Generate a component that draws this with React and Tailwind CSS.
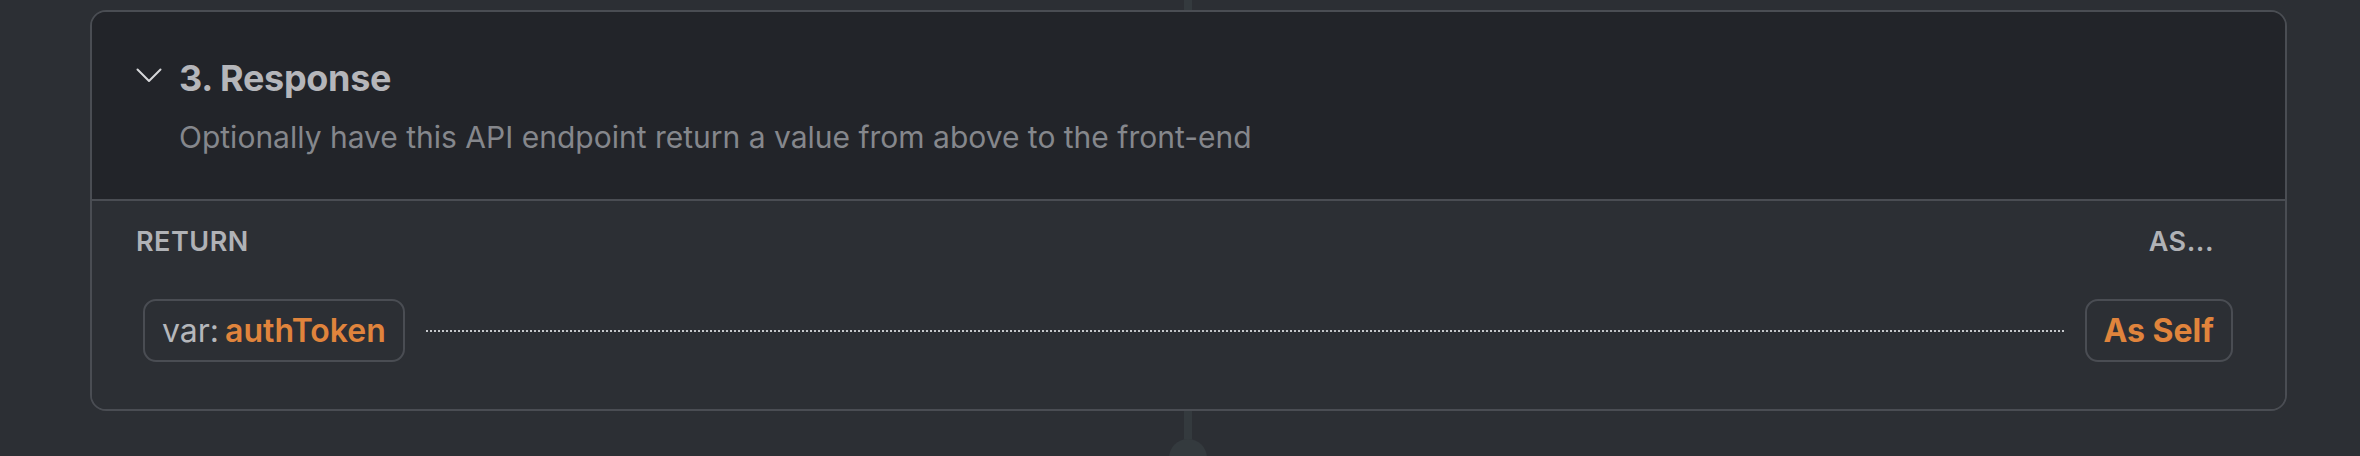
import React from 'react'

// Collapsible "Response" step card of an API endpoint builder
function Chevron() {
  return (
    <svg width="26" height="15" viewBox="0 0 26 15" fill="none" className="-mt-[6px] shrink-0">
      <polyline points="1.5,1.5 13,13 24.5,1.5" stroke="#d6d7d9" strokeWidth="2" strokeLinecap="round" strokeLinejoin="round" />
    </svg>
  )
}

function Pill({ children }) {
  return (
    <div className="flex h-[63px] shrink-0 items-center rounded-[13px] border-2 border-[#4a4d53] px-[17px] text-[32px] leading-none">
      {children}
    </div>
  )
}

export default function App() {
  return (
    <div
      className="flex h-[456px] w-[2360px] flex-col overflow-hidden bg-[#2c2f34] text-[#b5b6ba]"
      style={{ fontFamily: 'Inter, "Noto Sans", sans-serif' }}
    >
      {/* connector above */}
      <div className="ml-[1184px] h-[10px] w-[8px] shrink-0 bg-[#343a3e]" />

      <div className="ml-[90px] w-[2197px] shrink-0 overflow-hidden rounded-[16px] border-2 border-[#4a4d53]">
        {/* header */}
        <div className="border-b-2 border-[#4a4d53] bg-[#222429] pl-[44px] pt-[45px] pb-[44px]">
          <div className="flex items-center gap-[17px]">
            <Chevron />
            <h2 className="text-[36px] font-bold leading-[43px] tracking-[-0.3px] text-[#b5b6ba]">3. Response</h2>
          </div>
          <p className="mt-[19px] pl-[43px] text-[30px] leading-[36px] text-[#85878c]">
            Optionally have this API endpoint return a value from above to the front-end
          </p>
        </div>

        {/* body */}
        <div className="bg-[#2c2f34] pt-[23px] pb-[47px]">
          <div className="flex items-center justify-between pl-[44px] pr-[71px] text-[27px] font-semibold uppercase leading-[36px] tracking-[0.5px] text-[#b0b2b6]">
            <span>Return</span>
            <span>As...</span>
          </div>
          <div className="mt-[39px] flex items-center pl-[51px] pr-[52px]">
            <Pill>
              <span className="text-[#b5b7bb]">var:</span>
              <span className="ml-[6px] font-semibold text-[#e0843c]">authToken</span>
            </Pill>
            <div className="mx-[21px] h-0 flex-1 border-t-2 border-dotted border-[#c5c7ca]" />
            <Pill>
              <span className="font-bold text-[#e0843c]">As Self</span>
            </Pill>
          </div>
        </div>
      </div>

      {/* connector below */}
      <div className="ml-[1184px] h-[28px] w-[8px] shrink-0 bg-[#343a3e]" />
      <div className="ml-[1169px] h-[38px] w-[38px] shrink-0 rounded-full bg-[#343a3e]" />
    </div>
  )
}
